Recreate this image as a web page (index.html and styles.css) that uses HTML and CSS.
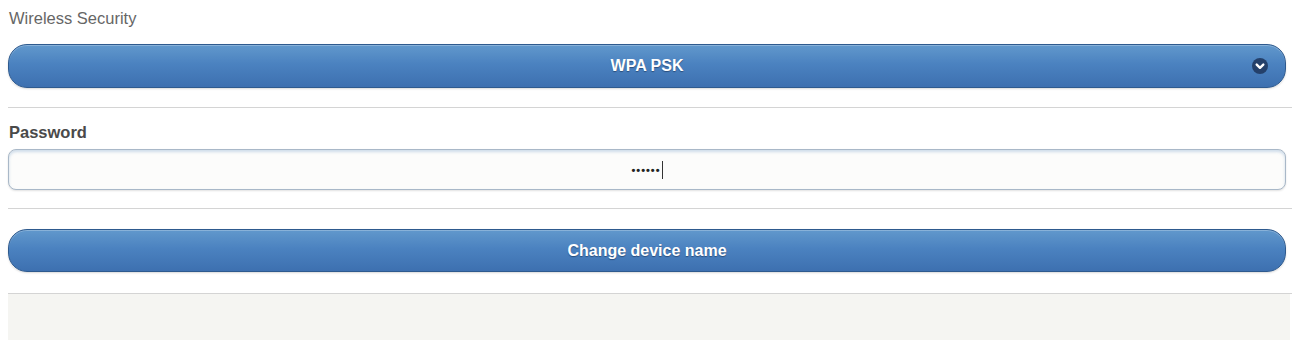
FILE: index.html
```html
<!DOCTYPE html>
<html>
<head>
<meta charset="utf-8">
<link rel="stylesheet" href="styles.css">
</head>
<body>
<div class="page">
  <div class="field">
    <div class="label label-light">Wireless Security</div>
    <div class="btn select">
      <span class="btn-text">WPA PSK</span>
      <span class="arrow">
        <svg width="16" height="16" viewBox="0 0 16 16">
          <circle cx="8" cy="8" r="8" fill="#24406a"/>
          <path d="M4.7 6.6 L8 9.8 L11.3 6.6" fill="none" stroke="#ffffff" stroke-width="2.4" stroke-linecap="round" stroke-linejoin="round"/>
        </svg>
      </span>
    </div>
  </div>
  <div class="rule"></div>
  <div class="field field-pw">
    <div class="label label-bold">Password</div>
    <div class="input">
      <span class="dots">••••••</span><span class="caret"></span>
    </div>
  </div>
  <div class="rule rule-2"></div>
  <div class="field field-btn">
    <div class="btn action"><span class="btn-text">Change device name</span></div>
  </div>
  <div class="rule rule-3"></div>
  <div class="footer"></div>
</div>
</body>
</html>
```
FILE: styles.css
```css
html, body {
  margin: 0;
  padding: 0;
  background: #ffffff;
}
body {
  font-family: "Liberation Sans", Arial, sans-serif;
  width: 1298px;
  height: 340px;
  overflow: hidden;
}
.page {
  padding: 0 6px 0 8px;
}
.field {
  padding-right: 6px;
}
.label {
  color: #555;
}
.label-light {
  font-size: 16.5px;
  line-height: 16px;
  padding-top: 10px;
  height: 44px;
  box-sizing: border-box;
  padding-left: 1px;
  color: #666666;
}
.label-bold {
  font-size: 16.5px;
  line-height: 16px;
  font-weight: bold;
  color: #4a4a4a;
  height: 25px;
  padding-left: 1px;
}
.btn {
  position: relative;
  display: flex;
  align-items: center;
  justify-content: center;
  border-radius: 19px;
  border: 1px solid #2e5a8e;
  background: linear-gradient(to bottom, #6198cc 0%, #4b82c0 45%, #3d70b0 100%);
  box-shadow: inset 0 1px 0 rgba(255,255,255,0.25), 0 1px 2px rgba(0,0,0,0.15);
  box-sizing: border-box;
}
.btn-text {
  color: #ffffff;
  font-weight: bold;
  font-size: 16px;
  text-shadow: 0 1px 1px #2a4e7c;
}
.select {
  height: 44px;
}
.arrow {
  position: absolute;
  right: 17px;
  top: 13px;
  width: 16px;
  height: 16px;
  display: block;
}
.arrow svg { display: block; }
.rule {
  height: 0;
  border-top: 1px solid #d4d4d4;
  margin-top: 19px;
}
.field-pw {
  padding-top: 16px;
}
.input {
  height: 41px;
  box-sizing: border-box;
  border: 1px solid #a9b8c8;
  border-radius: 8px;
  background: #fcfcfb;
  box-shadow: inset 0 2px 3px rgba(120,160,200,0.35), 0 1px 2px rgba(0,0,0,0.12);
  display: flex;
  align-items: center;
  justify-content: center;
}
.dots {
  font-size: 11px;
  font-weight: bold;
  letter-spacing: 1px;
  color: #222;
}
.caret {
  display: inline-block;
  width: 1px;
  height: 18px;
  background: #333;
  margin-left: 1px;
}
.rule-2 {
  margin-top: 18px;
}
.field-btn {
  padding-top: 20px;
}
.action {
  height: 43px;
}
.rule-3 {
  margin-top: 21px;
}
.footer {
  height: 60px;
  background: #f5f5f2;
  margin-right: 2px;
}
```
